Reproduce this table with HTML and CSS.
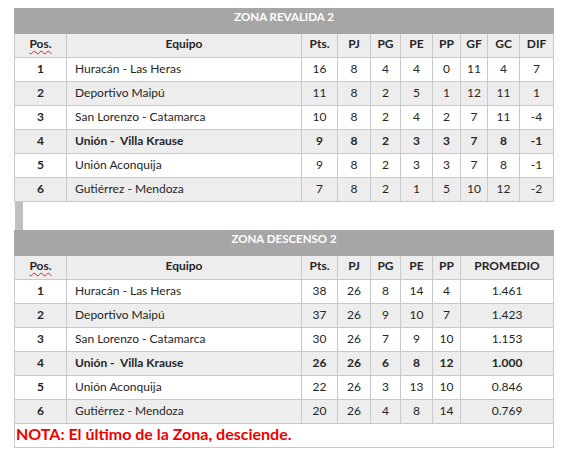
FILE: index.html
```html
<!DOCTYPE html>
<html lang="es">
<head>
<meta charset="utf-8">
<title>Zonas</title>
<link rel="stylesheet" href="styles.css">
</head>
<body>
<div class="page">
  <table class="tabla">
    <colgroup>
      <col class="c-pos"><col class="c-eq"><col class="c-pts"><col class="c-pj"><col class="c-pg"><col class="c-pe"><col class="c-pp"><col class="c-gf"><col class="c-gc"><col class="c-dif">
    </colgroup>
    <tr class="titulo"><th colspan="10">ZONA REVALIDA 2</th></tr>
    <tr class="cab alt"><th><span class="spell">Pos.</span></th><th>Equipo</th><th>Pts.</th><th>PJ</th><th>PG</th><th>PE</th><th>PP</th><th>GF</th><th>GC</th><th>DIF</th></tr>
    <tr><td class="pos">1</td><td class="eq">Huracán - Las Heras</td><td>16</td><td>8</td><td>4</td><td>4</td><td>0</td><td>11</td><td>4</td><td>7</td></tr>
    <tr class="alt"><td class="pos">2</td><td class="eq">Deportivo Maipú</td><td>11</td><td>8</td><td>2</td><td>5</td><td>1</td><td>12</td><td>11</td><td>1</td></tr>
    <tr><td class="pos">3</td><td class="eq">San Lorenzo - Catamarca</td><td>10</td><td>8</td><td>2</td><td>4</td><td>2</td><td>7</td><td>11</td><td>-4</td></tr>
    <tr class="alt bold"><td class="pos">4</td><td class="eq">Unión -&nbsp; Villa Krause</td><td>9</td><td>8</td><td>2</td><td>3</td><td>3</td><td>7</td><td>8</td><td>-1</td></tr>
    <tr><td class="pos">5</td><td class="eq">Unión Aconquija</td><td>9</td><td>8</td><td>2</td><td>3</td><td>3</td><td>7</td><td>8</td><td>-1</td></tr>
    <tr class="alt"><td class="pos">6</td><td class="eq">Gutiérrez - Mendoza</td><td>7</td><td>8</td><td>2</td><td>1</td><td>5</td><td>10</td><td>12</td><td>-2</td></tr>
  </table>

  <div class="separador"><div class="barra"></div></div>

  <table class="tabla">
    <colgroup>
      <col class="c-pos"><col class="c-eq"><col class="c-pts"><col class="c-pj"><col class="c-pg"><col class="c-pe"><col class="c-pp"><col class="c-prom">
    </colgroup>
    <tr class="titulo"><th colspan="8">ZONA DESCENSO 2</th></tr>
    <tr class="cab alt"><th><span class="spell">Pos.</span></th><th>Equipo</th><th>Pts.</th><th>PJ</th><th>PG</th><th>PE</th><th>PP</th><th>PROMEDIO</th></tr>
    <tr><td class="pos">1</td><td class="eq">Huracán - Las Heras</td><td>38</td><td>26</td><td>8</td><td>14</td><td>4</td><td>1.461</td></tr>
    <tr class="alt"><td class="pos">2</td><td class="eq">Deportivo Maipú</td><td>37</td><td>26</td><td>9</td><td>10</td><td>7</td><td>1.423</td></tr>
    <tr><td class="pos">3</td><td class="eq">San Lorenzo - Catamarca</td><td>30</td><td>26</td><td>7</td><td>9</td><td>10</td><td>1.153</td></tr>
    <tr class="alt bold"><td class="pos">4</td><td class="eq">Unión -&nbsp; Villa Krause</td><td>26</td><td>26</td><td>6</td><td>8</td><td>12</td><td>1.000</td></tr>
    <tr><td class="pos">5</td><td class="eq">Unión Aconquija</td><td>22</td><td>26</td><td>3</td><td>13</td><td>10</td><td>0.846</td></tr>
    <tr class="alt"><td class="pos">6</td><td class="eq">Gutiérrez - Mendoza</td><td>20</td><td>26</td><td>4</td><td>8</td><td>14</td><td>0.769</td></tr>
    <tr class="nota"><td colspan="8">NOTA: El último de la Zona, desciende.</td></tr>
  </table>
</div>
</body>
</html>
```

FILE: styles.css
```css
html, body {
  margin: 0;
  padding: 0;
  background: #ffffff;
}

.page {
  padding: 8px 0 0 14px;
  font-family: Lato, "Liberation Sans", sans-serif;
  color: #262626;
}

.tabla {
  border-collapse: collapse;
  table-layout: fixed;
  width: 539px;
  font-size: 12px;
}

.c-pos { width: 52px; }
.c-eq { width: 235px; }
.c-pts { width: 36px; }
.c-pj { width: 33px; }
.c-pg { width: 30px; }
.c-pe { width: 32px; }
.c-pp { width: 28px; }
.c-gf { width: 27px; }
.c-gc { width: 32px; }
.c-dif { width: 34px; }
.c-prom { width: 93px; }

.tabla td,
.tabla th {
  border: 1px solid #c8c8c8;
  text-align: center;
  vertical-align: top;
  padding: 3px 2px 0;
  height: 21px;
  line-height: 15px;
  box-sizing: border-box;
  white-space: nowrap;
  overflow: hidden;
}

.tabla tr td { height: 24px; }

.titulo th {
  background: #a6a6a6;
  color: #ffffff;
  font-weight: 700;
  font-size: 11.5px;
  height: 25px;
  padding-top: 0;
  border-color: #a6a6a6;
}

.cab th {
  font-weight: 700;
  height: 24px;
  padding-top: 2px;
}

.alt td,
.alt th {
  background: #ededed;
}

.tabla td.pos { font-weight: 700; }

.bold td { font-weight: 700; }

.tabla td.eq {
  text-align: left;
  padding-left: 8px;
}

.spell {
  text-decoration: underline wavy #e02020;
  text-decoration-thickness: 1px;
  text-underline-offset: 2px;
}

.nota td {
  text-align: left;
  color: #ee0000;
  font-weight: 700;
  font-size: 16px;
  padding: 2px 1px 0;
  background: #ffffff;
}

.separador {
  height: 28px;
  padding-left: 1px;
}

.barra {
  width: 8px;
  height: 100%;
  background: #c0c0c0;
}
```
